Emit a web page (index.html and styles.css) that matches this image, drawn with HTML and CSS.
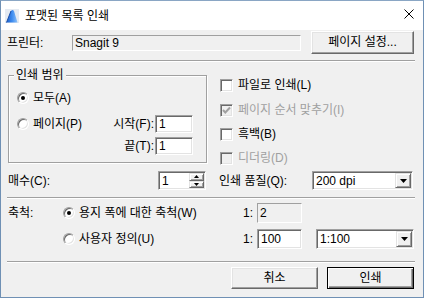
FILE: index.html
```html
<!DOCTYPE html>
<html lang="ko">
<head>
<meta charset="utf-8">
<title>포맷된 목록 인쇄</title>
<link rel="stylesheet" href="styles.css">
</head>
<body>
<div class="window">
  <div class="titlebar">
    <svg class="app-icon" width="14" height="14" viewBox="0 0 14 14">
      <defs>
        <linearGradient id="fin" x1="0" y1="0" x2="1" y2="0">
          <stop offset="0" stop-color="#1f5fc8"/>
          <stop offset="0.5" stop-color="#3d8cf0"/>
          <stop offset="1" stop-color="#8cc0f8"/>
        </linearGradient>
      </defs>
      <rect x="0" y="0" width="14" height="14" fill="#e4eaf2"/>
      <path d="M1.5 13.5 L6 2 Q7.5 0 9 2 L12.5 13.5 Z" fill="url(#fin)"/>
      <path d="M1.5 13.5 L6 2" stroke="#1a4ea8" stroke-width="1" fill="none"/>
    </svg>
    <span class="title">포맷된 목록 인쇄</span>
    <svg class="close" width="10" height="10" viewBox="0 0 10 10">
      <path d="M0.5 0.5 L9.5 9.5 M9.5 0.5 L0.5 9.5" stroke="#000" stroke-width="1" fill="none"/>
    </svg>
  </div>

  <div class="content">
    <div class="printer-row">
      <span class="printer-lbl">프린터:</span>
      <div class="field readonly printer-field">Snagit 9</div>
      <div class="btn setup-btn">페이지 설정...</div>
    </div>

    <div class="sep sep1"></div>

    <div class="mid">
      <div class="group">
        <span class="legend">인쇄 범위</span>
        <div class="g-row g-all"><span class="radio checked"></span><span class="opt">모두(A)</span></div>
        <div class="g-row g-pages"><span class="radio"></span><span class="opt">페이지(P)</span><span class="range-lbl">시작(F):</span><div class="field range-field">1</div></div>
        <div class="g-row g-end"><span class="range-lbl">끝(T):</span><div class="field range-field">1</div></div>
      </div>
      <div class="checks">
        <div class="chk-row c1"><span class="chk"></span><span class="opt">파일로 인쇄(L)</span></div>
        <div class="chk-row c2 disabled"><span class="chk off">
          <svg width="11" height="11" viewBox="0 0 11 11"><path d="M2 5 L4.3 7.5 L9 2.5" stroke="#a0a0a0" stroke-width="2" fill="none"/></svg>
        </span><span class="opt">페이지 순서 맞추기(I)</span></div>
        <div class="chk-row c3"><span class="chk"></span><span class="opt">흑백(B)</span></div>
        <div class="chk-row c4 disabled"><span class="chk off"></span><span class="opt">디더링(D)</span></div>
      </div>
    </div>

    <div class="copies-row">
      <div class="copies">
        <span>매수(C):</span>
        <div class="spin">
          <span class="spin-text">1</span>
          <div class="spin-btns">
            <span class="spin-btn"><svg width="5" height="3" viewBox="0 0 5 3"><polygon points="2.5,0 5,3 0,3" fill="#000"/></svg></span>
            <span class="spin-btn"><svg width="5" height="3" viewBox="0 0 5 3"><polygon points="0,0 5,0 2.5,3" fill="#000"/></svg></span>
          </div>
        </div>
      </div>
      <div class="quality">
        <span>인쇄 품질(Q):</span>
        <div class="combo quality-combo">
          <span class="combo-text">200 dpi</span>
          <span class="combo-btn"><svg width="7" height="4" viewBox="0 0 7 4"><polygon points="0,0 7,0 3.5,4" fill="#000"/></svg></span>
        </div>
      </div>
    </div>

    <div class="sep sep2"></div>

    <div class="scale-row scale-a">
      <span class="scale-lbl">축척:</span>
      <div class="scale-opt"><span class="radio checked"></span><span class="opt">용지 폭에 대한 축척(W)</span></div>
      <span class="ratio-lbl">1:</span>
      <div class="field readonly ratio-field">2</div>
    </div>
    <div class="scale-row scale-b">
      <span class="scale-lbl"></span>
      <div class="scale-opt"><span class="radio"></span><span class="opt">사용자 정의(U)</span></div>
      <span class="ratio-lbl">1:</span>
      <div class="field ratio-field">100</div>
      <div class="combo scale-combo">
        <span class="combo-text">1:100</span>
        <span class="combo-btn"><svg width="7" height="4" viewBox="0 0 7 4"><polygon points="0,0 7,0 3.5,4" fill="#000"/></svg></span>
      </div>
    </div>

    <div class="sep sep3"></div>

    <div class="buttons">
      <div class="btn cancel-btn">취소</div>
      <div class="btn default-btn">인쇄</div>
    </div>
  </div>
</div>
</body>
</html>
```

FILE: styles.css
```css
html, body {
  margin: 0;
  padding: 0;
  background: #ffffff;
}

.window {
  width: 424px;
  height: 298px;
  box-sizing: border-box;
  border: 1px solid #6f90b4;
  border-top-color: #8aa6c4;
  background: #f0f0f0;
  font-family: "Liberation Sans", "Noto Sans CJK KR", sans-serif;
  font-size: 12px;
  line-height: 14px;
  color: #000;
  display: flex;
  flex-direction: column;
  overflow: hidden;
}

/* title bar */
.titlebar {
  height: 29px;
  flex: none;
  background: #ffffff;
  display: flex;
  align-items: center;
}
.app-icon {
  margin-left: 4px;
  flex: none;
}
.title {
  margin-left: 6px;
  font-family: "Noto Sans CJK KR", sans-serif;
  font-size: 12px;
  margin-top: -2px;
}
.close {
  margin-left: auto;
  margin-right: 9px;
  margin-top: -3px;
}

/* content */
.content {
  padding: 0 9px 0 6px;
  display: flex;
  flex-direction: column;
}

.printer-row {
  margin-top: 1px;
  height: 23px;
  display: flex;
  align-items: center;
}
.printer-lbl {
  width: 65px;
  flex: none;
}
.printer-field {
  width: 229px;
  height: 16px;
}
.setup-btn {
  margin-left: auto;
  width: 103px;
  height: 23px;
}

/* generic controls */
.field {
  box-sizing: border-box;
  background: #ffffff;
  border: 1px solid;
  border-color: #a0a0a0 #ffffff #ffffff #a0a0a0;
  box-shadow: inset 1px 1px 0 #696969, inset -1px -1px 0 #e3e3e3;
  padding-left: 3px;
  display: flex;
  align-items: center;
}
.field.readonly {
  background: #f0f0f0;
  box-shadow: none;
  padding-left: 2px;
}

.btn {
  box-sizing: border-box;
  background: #f0f0f0;
  border: 1px solid;
  border-color: #ffffff #696969 #696969 #ffffff;
  box-shadow: inset -1px -1px 0 #a0a0a0, inset 1px 1px 0 #e3e3e3;
  display: flex;
  align-items: center;
  justify-content: center;
  padding-bottom: 1px;
}
.btn.default-btn {
  border: 1px solid #000;
  box-shadow: inset 1px 1px 0 #ffffff, inset -1px -1px 0 #696969, inset -2px -2px 0 #a0a0a0;
}

.sep {
  height: 0;
  border-top: 1px solid #a0a0a0;
  border-bottom: 1px solid #ffffff;
  margin-right: -1px;
}
.sep1 { margin-top: 6px; }
.sep2 { margin-top: 7px; }
.sep3 { margin-top: 12px; }

.radio {
  flex: none;
  width: 12px;
  height: 12px;
  box-sizing: border-box;
  border-radius: 50%;
  background: #ffffff;
  border: 1px solid;
  border-color: #a0a0a0 #ffffff #ffffff #a0a0a0;
  box-shadow: inset 1px 1px 0 #696969, inset -1px -1px 0 #e3e3e3;
  display: flex;
  align-items: center;
  justify-content: center;
}
.radio.checked::after {
  content: "";
  width: 4px;
  height: 4px;
  border-radius: 50%;
  background: #000;
}

.chk {
  flex: none;
  width: 13px;
  height: 13px;
  box-sizing: border-box;
  background: #ffffff;
  border: 1px solid;
  border-color: #a0a0a0 #ffffff #ffffff #a0a0a0;
  box-shadow: inset 1px 1px 0 #696969, inset -1px -1px 0 #e3e3e3;
  display: flex;
  align-items: center;
  justify-content: center;
}
.chk.off {
  background: #f0f0f0;
}
.chk svg {
  display: block;
}

.opt {
  margin-left: 4px;
  white-space: nowrap;
}
.disabled .opt {
  color: #a0a0a0;
}

/* middle: range group and options */
.mid {
  display: flex;
  align-items: flex-start;
  margin-left: 1px;
}
.group {
  margin-top: 13px;
  width: 199px;
  box-sizing: border-box;
  border: 1px solid #a0a0a0;
  box-shadow: inset 1px 1px 0 #ffffff, 1px 1px 0 #ffffff;
  padding: 0 0 7px 0;
  display: flex;
  flex-direction: column;
}
.legend {
  align-self: flex-start;
  margin: -8px 0 0 5px;
  padding: 0 2px;
  height: 14px;
  background: #f0f0f0;
}
.g-row {
  height: 18px;
  display: flex;
  align-items: center;
  padding-left: 8px;
  padding-right: 13px;
}
.g-all { margin-top: 7px; }
.g-pages { margin-top: 8px; }
.g-end { margin-top: 4px; justify-content: flex-end; }
.range-lbl {
  margin-left: auto;
  padding-right: 1px;
}
.range-field {
  width: 38px;
  height: 18px;
  flex: none;
}

.checks {
  margin-left: 13px;
  display: flex;
  flex-direction: column;
}
.chk-row {
  height: 16px;
  display: flex;
  align-items: center;
}
.chk-row .opt { margin-left: 5px; }
.c1 { margin-top: 15px; }
.c2 { margin-top: 9px; }
.c3 { margin-top: 8px; }
.c4 { margin-top: 8px; }

/* copies and quality */
.copies-row {
  margin-top: 5px;
  height: 19px;
  display: flex;
  align-items: center;
}
.copies {
  width: 199px;
  display: flex;
  align-items: center;
  padding-left: 1px;
  box-sizing: border-box;
}
.spin {
  margin-left: auto;
  width: 48px;
  height: 19px;
  box-sizing: border-box;
  background: #ffffff;
  border: 1px solid;
  border-color: #a0a0a0 #ffffff #ffffff #a0a0a0;
  box-shadow: inset 1px 1px 0 #696969, inset -1px -1px 0 #e3e3e3;
  display: flex;
  padding: 1px;
}
.spin-text {
  flex: 1;
  padding-left: 2px;
  display: flex;
  align-items: center;
}
.spin-btns {
  width: 15px;
  display: flex;
  flex-direction: column;
}
.spin-btn {
  flex: 1;
  box-sizing: border-box;
  background: #f0f0f0;
  border: 1px solid;
  border-color: #e3e3e3 #696969 #696969 #e3e3e3;
  box-shadow: inset 1px 1px 0 #ffffff, inset -1px -1px 0 #a0a0a0;
  display: flex;
  align-items: center;
  justify-content: center;
}
.spin-btn svg { display: block; }

.quality {
  margin-left: 13px;
  flex: 1;
  display: flex;
  align-items: center;
}
.combo {
  box-sizing: border-box;
  height: 19px;
  background: #ffffff;
  border: 1px solid;
  border-color: #a0a0a0 #ffffff #ffffff #a0a0a0;
  box-shadow: inset 1px 1px 0 #696969, inset -1px -1px 0 #e3e3e3;
  display: flex;
  padding: 1px;
}
.quality-combo {
  margin-left: auto;
  width: 101px;
  margin-right: 1px;
}
.combo-text {
  flex: 1;
  padding-left: 2px;
  display: flex;
  align-items: center;
}
.combo-btn {
  width: 16px;
  box-sizing: border-box;
  background: #f0f0f0;
  border: 1px solid;
  border-color: #e3e3e3 #696969 #696969 #e3e3e3;
  box-shadow: inset 1px 1px 0 #ffffff, inset -1px -1px 0 #a0a0a0;
  display: flex;
  align-items: center;
  justify-content: center;
}
.combo-btn svg { display: block; }

/* scale */
.scale-row {
  height: 20px;
  display: flex;
  align-items: center;
  padding-left: 1px;
}
.scale-a { margin-top: 4px; }
.scale-b { margin-top: 6px; }
.scale-lbl {
  width: 55px;
  flex: none;
}
.scale-opt {
  width: 180px;
  flex: none;
  display: flex;
  align-items: center;
}
.ratio-lbl {
  width: 14px;
  flex: none;
}
.ratio-field {
  width: 45px;
  height: 20px;
  flex: none;
}
.scale-combo {
  margin-left: 14px;
  width: 99px;
  height: 20px;
}

/* buttons */
.buttons {
  margin-top: 4px;
  display: flex;
  justify-content: flex-end;
  gap: 9px;
}
.buttons .btn {
  width: 87px;
  height: 22px;
}
```
